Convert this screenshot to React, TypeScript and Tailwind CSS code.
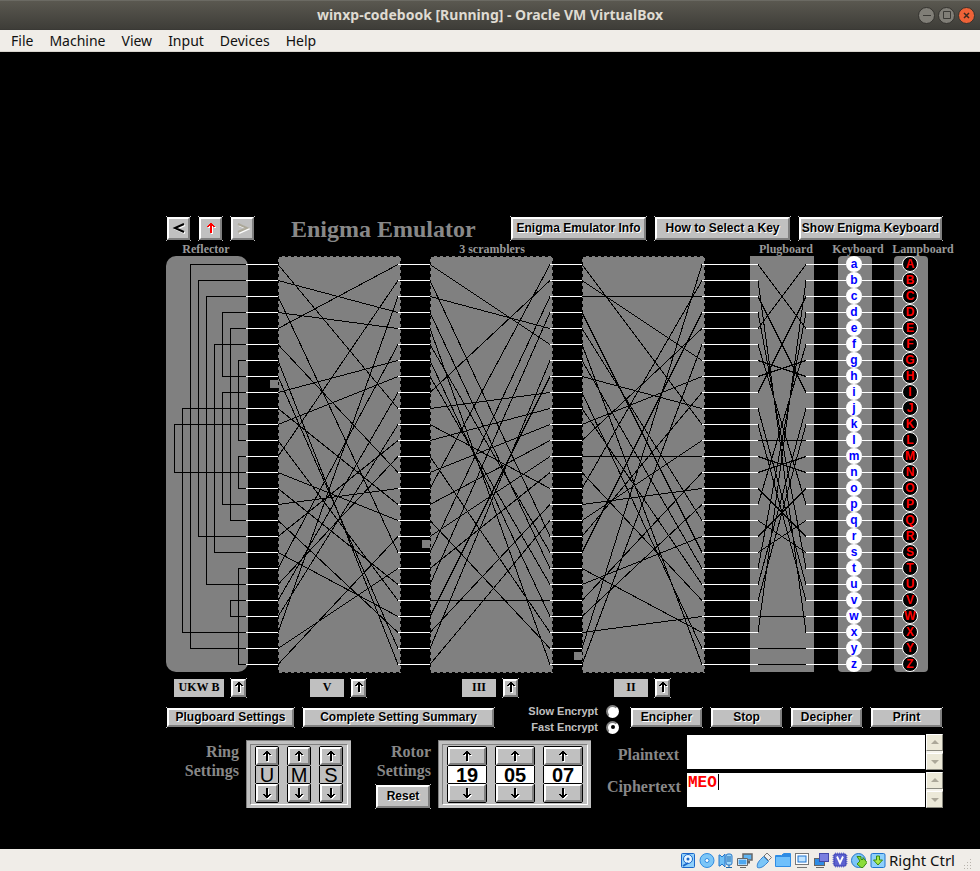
import React, { useState } from "react";
import type { ReactNode } from "react";

const ALPHABET = "ABCDEFGHIJKLMNOPQRSTUVWXYZ";
const ROW = 16;
const wireY = (i: number) => i * ROW + 8.5;
const mod = (n: number) => ((n % 26) + 26) % 26;

const ROTORS = [
  { name: "V", wiring: "VZBRGITYUPSDNHLXAWMJQOFECK", ring: "U", position: 19, x: 112, notch: 8 },
  { name: "III", wiring: "BDFHJLCPRTXVZNYEIWGAKMUSQO", ring: "M", position: 5, x: 264, notch: 18 },
  { name: "II", wiring: "AJDKSIRUXBLHWTMCQGZNPYFVOE", ring: "S", position: 7, x: 416, notch: 25 },
];

// Each reflector pair with the x of its vertical run
const REFLECTOR: [string, number][] = [
  ["AY", 24], ["BR", 32], ["CU", 40], ["DH", 56], ["EQ", 64], ["FS", 48], ["GL", 72],
  ["IP", 56], ["JX", 16], ["KN", 8], ["MO", 72], ["TZ", 72], ["VW", 64],
];

const PLUGS = ["AE", "BX", "CI", "DT", "FP", "GH", "JU", "KV", "MN", "OR", "QS"];

const plug = (letter: string) => {
  const pair = PLUGS.find((p) => p.includes(letter));
  return pair ? pair.replace(letter, "") : letter;
};

const WIRE_RUNS: [number, number][] = [
  [80, 112], [232, 264], [384, 416], [536, 592], [640, 680], [696, 736],
];

function Wiring() {
  return (
    <svg
      className="pointer-events-none absolute left-0 top-0"
      width="762"
      height="417"
      viewBox="0 0 762 417"
      fill="none"
      shapeRendering="crispEdges"
      aria-hidden="true"
    >
      <g stroke="#000">
        {REFLECTOR.map(([pair, x]) => {
          const a = wireY(ALPHABET.indexOf(pair[0]));
          const b = wireY(ALPHABET.indexOf(pair[1]));
          return <path key={pair} d={`M80 ${a}H${x + 0.5}V${b}H80`} />;
        })}
        {ROTORS.map((r) => {
          const offset = r.position - 1 - ALPHABET.indexOf(r.ring);
          return (
            <g key={r.name}>
              <rect x={r.x - 8} y={r.notch * ROW - 4} width="8" height="8" fill="#808080" stroke="none" />
              <rect x={r.x + 0.5} y="0.5" width="122" height="416" strokeDasharray="3 3" />
              {[...ALPHABET].map((letter, i) => {
                const left = mod(ALPHABET.indexOf(r.wiring[mod(i + offset)]) - offset);
                return <path key={letter} d={`M${r.x} ${wireY(left)}L${r.x + 120} ${wireY(i)}`} />;
              })}
            </g>
          );
        })}
        {[...ALPHABET].map((letter, i) => (
          <path key={letter} d={`M592 ${wireY(i)}L640 ${wireY(ALPHABET.indexOf(plug(letter)))}`} />
        ))}
      </g>
      <g stroke="#fff">
        {[...ALPHABET].map((letter, i) =>
          WIRE_RUNS.map(([from, to]) => <path key={letter + from} d={`M${from} ${wireY(i)}H${to}`} />),
        )}
      </g>
    </svg>
  );
}

function Arrow({ down = false, color = "#000" }: { down?: boolean; color?: string }) {
  const d = down
    ? "M3 0h2v10H3zM2 8h4v1H2zM1 7h2v1H1zM5 7h2v1H5zM0 6h2v1H0zM6 6h2v1H6z"
    : "M3 0h2v10H3zM2 1h4v1H2zM1 2h2v1H1zM5 2h2v1H5zM0 3h2v1H0zM6 3h2v1H6z";
  return (
    <svg className="overflow-visible" width="8" height="10" viewBox="0 0 8 10" shapeRendering="crispEdges" aria-hidden="true">
      <path d={d} fill="#fff" transform="translate(1 1)" />
      <path d={d} fill={color} />
    </svg>
  );
}

function BevelButton({ className, label, disabled, children }: { className: string; label?: string; disabled?: boolean; children: ReactNode }) {
  return (
    <button
      type="button"
      aria-label={label}
      disabled={disabled}
      className={`flex shrink-0 bg-[linear-gradient(#c0c0c0,#c0c0c0),linear-gradient(#c0c0c0,#c0c0c0),linear-gradient(#c0c0c0,#c0c0c0),linear-gradient(#c0c0c0,#c0c0c0)] bg-[length:1px_1px] bg-no-repeat p-px [background-position:0_0,100%_0,0_100%,100%_100%] ${className}`}
    >
      <span className="flex h-full w-full items-center justify-center whitespace-nowrap border-2 border-b-[#808080] border-l-white border-r-[#808080] border-t-white bg-[#c0c0c0] pb-0.5 text-xs font-bold text-black [text-shadow:1px_1px_0_#fff]">
        {children}
      </span>
    </button>
  );
}

function Chevron({ back = false, color }: { back?: boolean; color: string }) {
  const d = back ? "M11 1L2 5L11 9" : "M1 1L10 5L1 9";
  return (
    <svg className="overflow-visible" width="12" height="10" viewBox="0 0 12 10" fill="none" strokeWidth="2" aria-hidden="true">
      <path d={d} stroke="#fff" transform="translate(1 1)" />
      <path d={d} stroke={color} />
    </svg>
  );
}

function StepButton({ down, label }: { down?: boolean; label: string }) {
  return (
    <button type="button" aria-label={label} className="h-5 w-full rounded-xs border border-black bg-[#c0c0c0]">
      <span className="flex h-full items-center justify-center border-2 border-b-[#808080] border-l-white border-r-[#808080] border-t-white">
        <Arrow down={down} />
      </span>
    </button>
  );
}

function Dial({ label, value, wide }: { label: string; value: string; wide?: boolean }) {
  return (
    <div className={`flex flex-col ${wide ? "w-10" : "w-6"}`}>
      <StepButton label={`${label} up`} />
      <output
        aria-label={label}
        className={`flex h-[17px] items-center justify-center border-x border-black text-xl leading-4 text-black ${wide ? "bg-white font-bold" : ""}`}
      >
        {value}
      </output>
      <StepButton down label={`${label} down`} />
    </div>
  );
}

function DialPanel({ children }: { children: ReactNode }) {
  return (
    <div className="h-[68px] border-l border-t border-[#808080] bg-[#c0c0c0] p-[3px]">
      <div className="flex h-full gap-2 border border-b-white border-l-[#808080] border-r-white border-t-[#808080] px-1 pt-px">
        {children}
      </div>
    </div>
  );
}

function ScrollBar() {
  const cell =
    "flex h-[17px] items-center justify-center border border-b-[#8b8a80] border-l-white border-r-[#8b8a80] border-t-white bg-[#ece9d8]";
  return (
    <div className="flex h-9 w-[17px] flex-col justify-between bg-[#f6f4ec]">
      <button type="button" aria-label="Scroll up" disabled className={cell}>
        <svg width="8" height="5" viewBox="0 0 8 5"><path d="M4 0l4 4H0z" fill="#aca899" /></svg>
      </button>
      <button type="button" aria-label="Scroll down" disabled className={cell}>
        <svg width="8" height="5" viewBox="0 0 8 5"><path d="M4 5l4-4H0z" fill="#aca899" /></svg>
      </button>
    </div>
  );
}

function TextField({ id, label, labelClass, value, onChange }: { id: string; label: string; labelClass: string; value: string; onChange: (v: string) => void }) {
  return (
    <div className="flex items-center">
      <label htmlFor={id} className={`w-20 pr-2 text-right font-['Liberation_Serif',serif] text-base font-bold leading-5 text-[#888] ${labelClass}`}>
        {label}
      </label>
      <div className="relative mr-px flex">
        <textarea
          id={id}
          value={value}
          onChange={(e) => onChange(e.target.value)}
          className="h-[34px] w-[238px] resize-none overflow-hidden bg-white px-px font-['Liberation_Mono',monospace] text-base font-bold leading-5 text-[#f00] outline-none"
        />
        {value && <span className="absolute left-[31px] top-px h-4 w-px bg-black" />}
      </div>
      <ScrollBar />
    </div>
  );
}

function Machine() {
  const [plain, setPlain] = useState("");
  const [cipher, setCipher] = useState("MEO");
  const [speed, setSpeed] = useState("Fast");
  const serif = "font-['Liberation_Serif',serif] font-bold";

  return (
    <div className="w-[777px] font-['Liberation_Sans',sans-serif]">
      <header className="flex h-[25px] items-start">
        <div className="flex gap-[7px]">
          <BevelButton className="h-[25px] w-[25px]" label="Back"><Chevron back color="#000" /></BevelButton>
          <BevelButton className="h-[25px] w-[25px]" label="Up"><Arrow color="#f00" /></BevelButton>
          <BevelButton className="h-[25px] w-[25px]" label="Forward" disabled><Chevron color="#aca899" /></BevelButton>
        </div>
        <h1 className={`flex-1 pl-9 text-2xl leading-[26px] text-[#888] ${serif}`}>Enigma Emulator</h1>
        <div className="flex gap-[7px]">
          <BevelButton className="h-[25px] w-[137px]">Enigma Emulator Info</BevelButton>
          <BevelButton className="h-[25px] w-[137px]">How to Select a Key</BevelButton>
          <BevelButton className="h-[25px] w-[145px]">Show Enigma Keyboard</BevelButton>
        </div>
      </header>

      <div className={`flex h-[15px] whitespace-nowrap text-center text-xs leading-4 text-[#999] ${serif}`}>
        <span className="w-20 shrink-0">Reflector</span>
        <span className="ml-8 w-[428px] shrink-0">3 scramblers</span>
        <span className="ml-12 w-16 shrink-0">Plugboard</span>
        <span className="ml-3.5 w-[52px] shrink-0">Keyboard</span>
        <span className="ml-2 w-[62px] shrink-0">Lampboard</span>
      </div>

      <div className="relative flex h-[417px] w-[762px] items-start">
        <div className="h-[416px] w-[82px] rounded-[10px] bg-[#808080]" />
        <div className="ml-[30px] flex gap-[29px]">
          {ROTORS.map((r) => <div key={r.name} className="h-[417px] w-[123px] bg-[#808080]" />)}
        </div>
        <div className="ml-[45px] h-[416px] w-16 bg-[#808080]" />
        <div className="ml-6 flex w-[34px] flex-col items-center rounded-[4px] bg-[#808080] pr-0.5">
          {[...ALPHABET].map((letter) => (
            <button key={letter} type="button" className="h-4 w-4 rounded-full bg-white text-center text-xs font-bold leading-[14px] text-[#00f]">
              {letter.toLowerCase()}
            </button>
          ))}
        </div>
        <div className="ml-[22px] flex w-[34px] flex-col items-center rounded-[4px] bg-[#808080] pr-0.5">
          {[...ALPHABET].map((letter) => (
            <span key={letter} className="h-4 w-4 rounded-full border border-white bg-black text-center text-xs font-bold leading-[14px] text-[#f00]">
              {letter}
            </span>
          ))}
        </div>
        <Wiring />
      </div>

      <div className="flex h-[29px] items-start pt-[5px]">
        <div className="flex w-36 items-center gap-1.5 pl-2">
          <span className={`flex h-[18px] w-[50px] items-center justify-center bg-[#c0c0c0] pb-0.5 text-xs text-black ${serif}`}>UKW B</span>
          <BevelButton className="h-5 w-[17px]" label="Change reflector"><Arrow /></BevelButton>
        </div>
        {ROTORS.map((r) => (
          <div key={r.name} className="flex w-[152px] items-center gap-1.5">
            <span className={`flex h-[18px] w-[34px] items-center justify-center bg-[#c0c0c0] pb-0.5 text-xs text-black ${serif}`}>{r.name}</span>
            <BevelButton className="h-5 w-[17px]" label={`Change scrambler ${r.name}`}><Arrow /></BevelButton>
          </div>
        ))}
      </div>

      <div className="flex h-8 items-start gap-[7px] pt-[5px]">
        <BevelButton className="h-[21px] w-[129px]">Plugboard Settings</BevelButton>
        <BevelButton className="h-[21px] w-[193px]">Complete Setting Summary</BevelButton>
        <div className="-mt-1 flex flex-1 flex-col items-end">
          {["Slow", "Fast"].map((s) => (
            <label key={s} className="flex h-4 items-center gap-2 pr-1 text-[11px] font-bold leading-4 text-[#c0c0c0]">
              {s} Encrypt
              <input
                type="radio"
                name="speed"
                checked={speed === s}
                onChange={() => setSpeed(s)}
                className="flex h-[13px] w-[13px] appearance-none items-center justify-center rounded-full border-2 border-b-white border-l-[#808080] border-r-white border-t-[#808080] bg-white checked:before:h-1 checked:before:w-1 checked:before:rounded-full checked:before:bg-black"
              />
            </label>
          ))}
        </div>
        {["Encipher", "Stop", "Decipher", "Print"].map((t) => (
          <BevelButton key={t} className="h-[21px] w-[73px]">{t}</BevelButton>
        ))}
      </div>

      <div className="flex items-start">
        <div className={`w-20 pr-[7px] pt-2 text-right text-base leading-[19px] text-[#888] ${serif}`}>Ring Settings</div>
        <div className="mt-1.5">
          <DialPanel>
            {ROTORS.map((r) => <Dial key={r.name} label={`Ring ${r.name}`} value={r.ring} />)}
          </DialPanel>
        </div>
        <div className="flex w-[87px] flex-col items-end pr-[7px] pt-2">
          <div className={`w-14 text-right text-base leading-[19px] text-[#888] ${serif}`}>Rotor Settings</div>
          <BevelButton className="mt-1 h-[25px] w-14">Reset</BevelButton>
        </div>
        <div className="mt-1.5">
          <DialPanel>
            {ROTORS.map((r) => <Dial key={r.name} wide label={`Rotor ${r.name}`} value={String(r.position).padStart(2, "0")} />)}
          </DialPanel>
        </div>
        <div className="ml-auto flex flex-col gap-0.5">
          <TextField id="plaintext" label="Plaintext" labelClass="pt-1.5" value={plain} onChange={setPlain} />
          <TextField id="ciphertext" label="Ciphertext" labelClass="pb-1.5" value={cipher} onChange={setCipher} />
        </div>
      </div>
    </div>
  );
}

const DEVICE_ICONS: { name: string; art: ReactNode }[] = [
  { name: "Hard disk", art: <><rect x="1.5" y="1.5" width="13" height="14" rx="1" fill="#8fd0fb" stroke="#1b66c9" /><circle cx="8" cy="7" r="4.5" fill="#e8f6ff" stroke="#1b66c9" /><circle cx="8" cy="7" r="1.5" fill="#1b66c9" /><path d="M3 14l5-3" stroke="#1b66c9" strokeWidth="2" /></> },
  { name: "Optical drive", art: <><circle cx="8" cy="8.500" r="7" fill="#7cc6f7" stroke="#2f8be0" /><circle cx="8" cy="8.500" r="2" fill="#fff" stroke="#2f8be0" /></> },
  { name: "Audio", art: <><path d="M1 3h1l2 2 3-3v13l-3-3-2 2H1z" fill="#6fc0f5" stroke="#2676c8" /><rect x="8" y="2" width="6" height="11" rx="2" fill="#9fd8fb" stroke="#2676c8" /><path d="M9 5h4M9 7h4M9 9h4M11 13v3M8 15.500h6" stroke="#1b66a9" /></> },
  { name: "Network", art: <><rect x="6" y="2" width="9" height="6" fill="#5fb4f2" stroke="#666" strokeWidth="1.500" /><path d="M12 9v2.500" stroke="#666" strokeWidth="2" /><rect x="1" y="7" width="9" height="6" fill="#4fa8f0" stroke="#fff" /><path d="M.5 6.500h10v7H.5zM3 15.500h6" stroke="#666" /></> },
  { name: "USB", art: <><path d="M1.500 15.500c-1-3 1-6 3-8l3-3 5 5-3 3c-2 2-5 4-8 3z" fill="#7cc6f7" stroke="#2f7fd0" /><path d="M8 4l3-3 4.500 4.500-3 3z" fill="#eee" stroke="#777" /></> },
  { name: "Shared folders", art: <><path d="M1 14V4h5l2-2h7v12z" fill="#2e8ce4" /><path d="M1 14V5h14v9z" fill="#6fc0fb" /><path d="M.5 14.500v-11h6l2-2h7v13z" stroke="#2e8ce4" fill="none" /></> },
  { name: "Display", art: <><rect x="1.500" y="1.500" width="13" height="11" fill="#fff" stroke="#777" /><rect x="4" y="4" width="8" height="6" fill="#bfe3ff" stroke="#1f74d0" /><path d="M3 15.500h10" stroke="#777" /></> },
  { name: "Recording", art: <><rect x="1.500" y="6.500" width="10" height="7" fill="#2e8ce4" stroke="#666" /><rect x="6.500" y="1.500" width="9" height="8" fill="#7a7fe0" stroke="#444aa8" /><path d="M3 15.500h8" stroke="#666" /></> },
  { name: "Processor", art: <><path d="M3.500.5v15M5.500.5v15M7.500.5v15M9.500.5v15M11.500.5v15M.5 3.500h15M.5 5.500h15M.5 7.500h15M.5 9.500h15M.5 11.500h15" stroke="#7f84dc" /><rect x="2" y="2" width="12" height="12" rx="1" fill="#5c62d0" stroke="#3c42b0" /><path d="M5 4.500l3 6.500 3-6.500" stroke="#fff" strokeWidth="1.800" /></> },
  { name: "Mouse integration", art: <><circle cx="7.500" cy="8.500" r="7" fill="#7cc6f7" stroke="#2676c8" /><path d="M6 4.500l4 0v3h2V5.500l4 5-4 5h-2l-4-3.500 3-3z" fill="#8bdc3a" stroke="#3a8a12" /></> },
  { name: "Keyboard capture", art: <><rect x="1" y="1.500" width="14" height="14" rx="1.500" fill="#8fd0fb" stroke="#1f74d0" /><path d="M6.500 4h3v4h3L8 13 3.500 8h3z" fill="#a8ea4e" stroke="#3a8a12" /></> },
];

export default function App() {
  const wm = "flex h-[17px] w-[17px] items-center justify-center rounded-full border border-[#33322e]";
  return (
    <div className="flex min-h-screen flex-col bg-black font-['Noto_Sans','Open_Sans',sans-serif]">
      <div className="grid h-[30px] grid-cols-[80px_1fr_80px] items-center border-b border-t border-b-[#3a3935] border-t-[#6b6a63] bg-linear-to-b from-[#5a5850] to-[#3e3d38]">
        <span />
        <span className="text-center text-sm font-bold text-[#dfdbd2]">winxp-codebook [Running] - Oracle VM VirtualBox</span>
        <div className="flex justify-end gap-[3px] pr-[5px]">
          <button type="button" aria-label="Minimize" className={`${wm} bg-[#807e77]`}>
            <svg width="8" height="8" viewBox="0 0 8 8" stroke="#3b3a36"><path d="M0 4.500h8" /></svg>
          </button>
          <button type="button" aria-label="Maximize" className={`${wm} bg-[#807e77]`}>
            <svg width="8" height="8" viewBox="0 0 8 8" fill="none" stroke="#3b3a36"><path d="M.5.5h7v7h-7z" /></svg>
          </button>
          <button type="button" aria-label="Close" className={`${wm} bg-[#ee6237]`}>
            <svg width="7" height="7" viewBox="0 0 7 7" stroke="#3b2a20" strokeWidth="1.500"><path d="M1 1l5 5M6 1L1 6" /></svg>
          </button>
        </div>
      </div>

      <nav className="flex h-[22px] items-center gap-4 border-b border-[#d8d4cd] bg-[#f0ede8] pl-[11px] text-sm text-[#111]">
        {["File", "Machine", "View", "Input", "Devices", "Help"].map((m) => (
          <button key={m} type="button">{m}</button>
        ))}
      </nav>

      <main className="flex flex-1 justify-end bg-black pr-[37px] pt-[164px]">
        <Machine />
      </main>

      <footer className="flex h-[22px] items-center justify-end gap-[3px] bg-[#f0ede8] pr-2 text-[#111]">
        {DEVICE_ICONS.map((icon) => (
          <svg key={icon.name} width="16" height="17" viewBox="0 0 16 17" fill="none" role="img" aria-label={icon.name}>
            {icon.art}
          </svg>
        ))}
        <span className="text-[15px]">Right Ctrl</span>
        <svg className="ml-1 self-end" width="10" height="12" viewBox="0 0 10 12" fill="#b8b4ac" aria-hidden="true">
          <path d="M8 0h1v1H8zM5 3h1v1H5zM8 3h1v1H8zM2 6h1v1H2zM5 6h1v1H5zM8 6h1v1H8zM2 9h1v1H2zM5 9h1v1H5zM8 9h1v1H8z" />
        </svg>
      </footer>
    </div>
  );
}
